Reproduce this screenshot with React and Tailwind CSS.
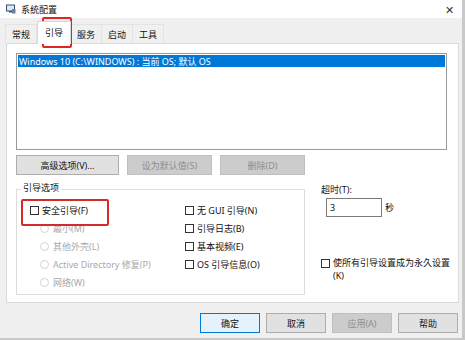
import React from 'react';

const font = "font-['Noto_Sans','Noto_Sans_CJK_SC',sans-serif]";

function Check({ label, className = '' }) {
  return (
    <div className={`flex items-center h-[18px] ${className}`}>
      <span className="w-[9px] h-[9px] border border-[#333] bg-white shrink-0" />
      <span className="ml-[3px] text-[9px] text-[#111] leading-none">{label}</span>
    </div>
  );
}

function Radio({ label }) {
  return (
    <div className="flex items-center h-[18px] pl-[10px]">
      <span className="w-[9px] h-[9px] rounded-full border border-[#d4d4d4] bg-white shrink-0" />
      <span className="ml-[4px] text-[9px] text-[#a8a8a8] leading-none">{label}</span>
    </div>
  );
}

function Btn({ children, disabled, primary, className = '' }) {
  let look = 'bg-[#e1e1e1] border-[#adadad] text-[#111]';
  if (disabled) look = 'bg-[#cccccc] border-[#bfbfbf] text-[#8c8c8c]';
  if (primary) look = 'bg-[#e5f1fb] border-[#0078d7] text-[#111]';
  return (
    <div className={`h-[20px] border flex items-center justify-center text-[9px] leading-none ${look} ${className}`}>
      {children}
    </div>
  );
}

export default function App() {
  const tabs = ['常规', '引导', '服务', '启动', '工具'];

  return (
    <div className={`relative w-[465px] h-[340px] overflow-hidden bg-[#c9c9c9] ${font}`}>
      <div className="w-[462px] h-[338px] bg-[#f0f0f0] flex flex-col">
        {/* title bar */}
        <div className="h-[18px] bg-white flex items-center pl-[6px] pr-[8px]">
          <svg width="10" height="10" viewBox="0 0 10 10">
            <rect x="0.5" y="1" width="8" height="6" fill="#dfe8f3" stroke="#30507a" strokeWidth="1" />
            <rect x="3" y="7" width="3" height="1.5" fill="#30507a" />
            <rect x="6" y="5" width="3.5" height="4.5" fill="#6c7f99" />
          </svg>
          <span className="ml-[5px] text-[9px] text-[#111] leading-none">系统配置</span>
          <span className="ml-auto text-[11px] text-[#333] leading-none">✕</span>
        </div>

        {/* tabs */}
        <div className="h-[25px] flex items-end pl-[6px]">
          {tabs.map((t, i) =>
            i === 1 ? (
              <div
                key={t}
                className="h-[23px] w-[34px] bg-white border border-b-0 border-[#d9d9d9] flex items-center justify-center text-[9px] text-[#111] leading-none -mb-px relative z-10 pb-[2px]"
              >
                {t}
              </div>
            ) : (
              <div
                key={t}
                className="h-[19px] w-[32px] border border-b-0 border-[#e3e3e3] -ml-px flex items-center justify-center text-[9px] text-[#111] leading-none"
              >
                {t}
              </div>
            )
          )}
        </div>

        {/* tab panel */}
        <div className="ml-[6px] w-[453px] h-[260px] bg-white border border-[#d9d9d9] pt-[9px] pl-[9px]">
          <div className="w-[431px] h-[97px] border border-[#9a9a9a] p-px">
            <div className="h-[12px] bg-[#0078d7] text-white text-[9px] leading-none flex items-center pl-[1px]">
              Windows 10 (C:\WINDOWS) : 当前 OS; 默认 OS
            </div>
          </div>

          <div className="flex gap-[8px] mt-[5px]">
            <Btn className="w-[103px]">高级选项(V)...</Btn>
            <Btn disabled className="w-[85px]">设为默认值(S)</Btn>
            <Btn disabled className="w-[85px]">删除(D)</Btn>
          </div>

          <div className="flex mt-[14px]">
            {/* boot options group */}
            <div className="relative w-[289px] h-[106px] border border-[#dcdcdc] pt-[11px] pl-[13px] flex">
              <span className="absolute -top-[7px] left-[4px] bg-white px-[2px] text-[9px] text-[#111] leading-none">
                引导选项
              </span>
              <div className="w-[155px] flex flex-col">
                <Check label="安全引导(F)" />
                <Radio label="最小(M)" />
                <Radio label="其他外壳(L)" />
                <Radio label="Active Directory 修复(P)" />
                <Radio label="网络(W)" />
              </div>
              <div className="flex flex-col">
                <Check label="无 GUI 引导(N)" />
                <Check label="引导日志(B)" />
                <Check label="基本视频(E)" />
                <Check label="OS 引导信息(O)" />
              </div>
            </div>

            {/* timeout */}
            <div className="ml-[16px] flex flex-col -mt-[4px]">
              <span className="text-[9px] text-[#111] leading-none">超时(T):</span>
              <div className="flex items-center mt-[4px] ml-[5px]">
                <div className="w-[56px] h-[19px] border border-[#7a7a7a] flex items-center pl-[3px] text-[9px] text-[#111] leading-none">
                  3
                </div>
                <span className="ml-[3px] text-[9px] text-[#111] leading-none">秒</span>
              </div>
              <div className="flex mt-[41px]">
                <span className="w-[9px] h-[9px] border border-[#333] shrink-0 mt-[1px]" />
                <span className="ml-[3px] w-[120px] text-[9px] text-[#111] leading-[13px] -mt-[2px]">
                  使所有引导设置成为永久设置
                  <br />
                  (K)
                </span>
              </div>
            </div>
          </div>
        </div>

        {/* footer buttons */}
        <div className="flex gap-[6px] pl-[200px] mt-[10px]">
          <Btn primary className="w-[60px]">确定</Btn>
          <Btn className="w-[60px]">取消</Btn>
          <Btn disabled className="w-[60px]">应用(A)</Btn>
          <Btn className="w-[60px]">帮助</Btn>
        </div>
      </div>

      {/* red annotation boxes */}
      <div className="absolute left-[42px] top-[17px] w-[30px] h-[31px] border-2 border-[#e02424] rounded-[2px]" />
      <div className="absolute left-[21px] top-[199px] w-[88px] h-[27px] border-2 border-[#d22b2b] rounded-[2px]" />
    </div>
  );
}
